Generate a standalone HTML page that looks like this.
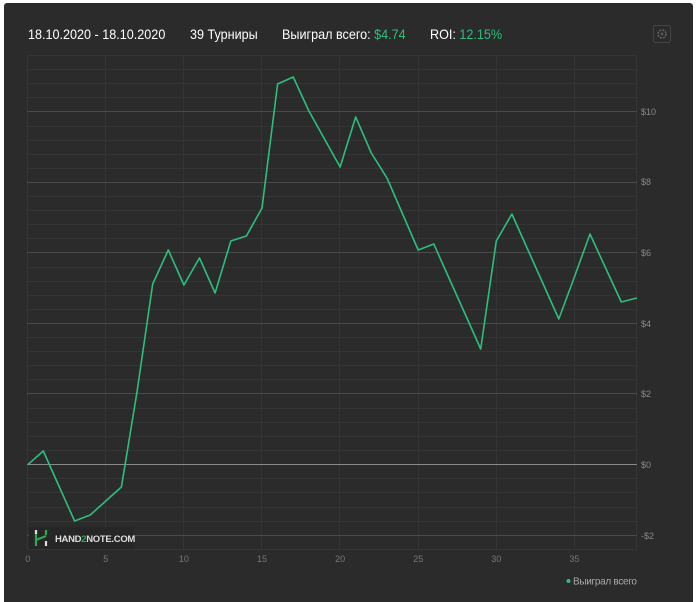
<!DOCTYPE html>
<html><head><meta charset="utf-8"><style>
html,body{margin:0;padding:0;background:#fff;width:700px;height:602px;overflow:hidden;position:relative}
.p{position:absolute;left:4px;top:3px;width:689px;height:599px;background:#2b2b2b;border-radius:3px 3px 0 0}
.h{position:absolute;top:26px;font:14px "Liberation Sans",sans-serif;color:#fff;white-space:nowrap;transform:scaleX(0.9);transform-origin:0 0}
.g{color:#2cbf7c}
svg{position:absolute;left:0;top:0}
</style></head><body>
<div class="p"></div>
<div class="h" style="left:28px">18.10.2020 - 18.10.2020</div>
<div class="h" style="left:190px">39 Турниры</div>
<div class="h" style="left:282px">Выиграл всего: <span class="g">$4.74</span></div>
<div class="h" style="left:430px">ROI: <span class="g">12.15%</span></div>
<svg width="700" height="602" font-family="Liberation Sans, sans-serif">
<rect x="653.5" y="25.5" width="17" height="17" rx="2" fill="none" stroke="#444"/>
<circle cx="662" cy="34" r="4" fill="none" stroke="#666" stroke-width="1.5" stroke-dasharray="2 1.2"/>
<circle cx="662" cy="34" r="1.5" fill="#555"/>
<g stroke="#353535" stroke-width="1">
<line x1="27" y1="55.5" x2="637" y2="55.5"/>
<line x1="27" y1="69.5" x2="637" y2="69.5"/>
<line x1="27" y1="83.5" x2="637" y2="83.5"/>
<line x1="27" y1="97.5" x2="637" y2="97.5"/>
<line x1="27" y1="126.5" x2="637" y2="126.5"/>
<line x1="27" y1="140.5" x2="637" y2="140.5"/>
<line x1="27" y1="154.5" x2="637" y2="154.5"/>
<line x1="27" y1="168.5" x2="637" y2="168.5"/>
<line x1="27" y1="196.5" x2="637" y2="196.5"/>
<line x1="27" y1="210.5" x2="637" y2="210.5"/>
<line x1="27" y1="224.5" x2="637" y2="224.5"/>
<line x1="27" y1="238.5" x2="637" y2="238.5"/>
<line x1="27" y1="267.5" x2="637" y2="267.5"/>
<line x1="27" y1="281.5" x2="637" y2="281.5"/>
<line x1="27" y1="295.5" x2="637" y2="295.5"/>
<line x1="27" y1="309.5" x2="637" y2="309.5"/>
<line x1="27" y1="337.5" x2="637" y2="337.5"/>
<line x1="27" y1="351.5" x2="637" y2="351.5"/>
<line x1="27" y1="365.5" x2="637" y2="365.5"/>
<line x1="27" y1="379.5" x2="637" y2="379.5"/>
<line x1="27" y1="408.5" x2="637" y2="408.5"/>
<line x1="27" y1="422.5" x2="637" y2="422.5"/>
<line x1="27" y1="436.5" x2="637" y2="436.5"/>
<line x1="27" y1="450.5" x2="637" y2="450.5"/>
<line x1="27" y1="478.5" x2="637" y2="478.5"/>
<line x1="27" y1="492.5" x2="637" y2="492.5"/>
<line x1="27" y1="507.5" x2="637" y2="507.5"/>
<line x1="27" y1="521.5" x2="637" y2="521.5"/>
<line x1="27" y1="549.5" x2="637" y2="549.5"/>
<line x1="27.5" y1="55" x2="27.5" y2="550"/>
<line x1="105.5" y1="55" x2="105.5" y2="550"/>
<line x1="183.5" y1="55" x2="183.5" y2="550"/>
<line x1="261.5" y1="55" x2="261.5" y2="550"/>
<line x1="339.5" y1="55" x2="339.5" y2="550"/>
<line x1="418.5" y1="55" x2="418.5" y2="550"/>
<line x1="496.5" y1="55" x2="496.5" y2="550"/>
<line x1="574.5" y1="55" x2="574.5" y2="550"/>
<line x1="636.5" y1="55" x2="636.5" y2="550"/>
</g>
<g stroke="#4a4a4a" stroke-width="1">
<line x1="27" y1="111.5" x2="637" y2="111.5"/>
<line x1="27" y1="182.5" x2="637" y2="182.5"/>
<line x1="27" y1="252.5" x2="637" y2="252.5"/>
<line x1="27" y1="323.5" x2="637" y2="323.5"/>
<line x1="27" y1="393.5" x2="637" y2="393.5"/>
<line x1="27" y1="535.5" x2="637" y2="535.5"/>
</g>
<line x1="27" y1="464.5" x2="637" y2="464.5" stroke="#8a8a8a" stroke-width="1"/>
<rect x="29" y="527" width="104" height="22" fill="#262626"/>
<g stroke-width="2.2">
<line x1="36" y1="530" x2="36" y2="546" stroke="#2fa84f"/>
<line x1="36" y1="540" x2="46" y2="536" stroke="#2fa84f"/>
<line x1="46" y1="530" x2="46" y2="535" stroke="#2fa84f"/>
<line x1="36" y1="530" x2="36" y2="534" stroke="#ddd"/>
<line x1="46" y1="541" x2="46" y2="546" stroke="#ddd"/>
</g>
<text x="55" y="542" font-size="9.5" font-weight="bold" fill="#ddd" letter-spacing="-0.3">HAND<tspan fill="#2fa84f">2</tspan>NOTE.COM</text>
<polyline fill="none" stroke="#2cbf7c" stroke-width="1.6" stroke-linejoin="round" points="27.7,464.8 43.3,451 58.9,486 74.6,521 90.2,515 105.8,501 121.4,487 137,392 152.7,284 168.3,250 183.9,285 199.5,258 215.1,293 230.8,241 246.4,236 262,208 277.6,84 293.2,77 308.9,111 324.5,139 340.1,167 355.7,117 371.3,153 387,178 402.6,214 418.2,250 433.8,244 449.4,279 465.1,314 480.7,349 496.3,241 511.9,214 527.5,249 543.2,284 558.8,319 574.4,277 590,234 605.6,268 621.3,302 636.9,298"/>
<g font-size="9" fill="#8a8a8a">
<text x="641" y="115">$10</text>
<text x="641" y="185">$8</text>
<text x="641" y="256">$6</text>
<text x="641" y="327">$4</text>
<text x="641" y="397">$2</text>
<text x="641" y="468">$0</text>
<text x="641" y="539">-$2</text>
</g>
<g font-size="9" fill="#777" text-anchor="middle">
<text x="27.7" y="562">0</text>
<text x="105.8" y="562">5</text>
<text x="183.9" y="562">10</text>
<text x="262" y="562">15</text>
<text x="340.1" y="562">20</text>
<text x="418.2" y="562">25</text>
<text x="496.3" y="562">30</text>
<text x="574.4" y="562">35</text>
</g>
<circle cx="568.5" cy="581" r="2" fill="#2cbf7c"/>
<text x="573" y="584.5" font-size="10" fill="#aaa" letter-spacing="-0.3">Выиграл всего</text>
</svg>
</body></html>
